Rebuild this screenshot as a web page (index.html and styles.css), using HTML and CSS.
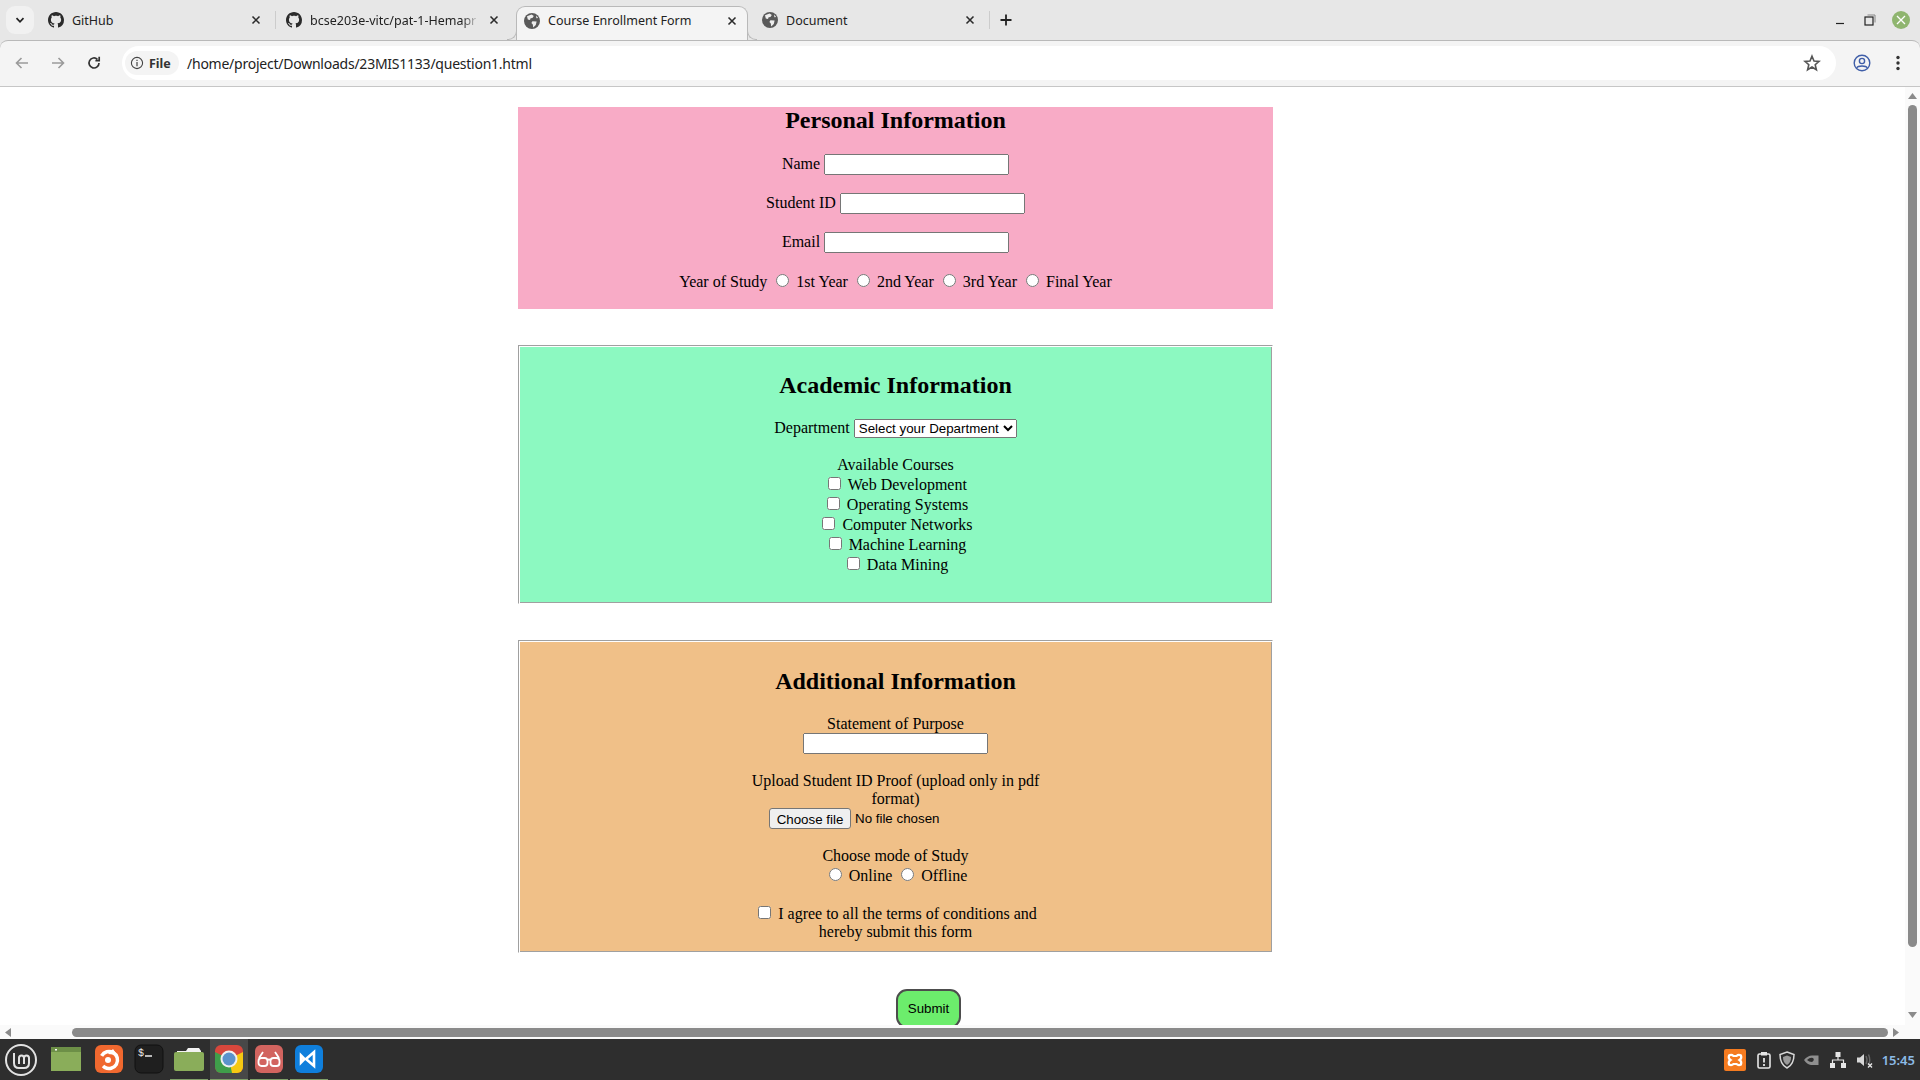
FILE: index.html
```html
<!DOCTYPE html>
<html lang="en">
<head>
<meta charset="utf-8">
<title>Course Enrollment Form</title>
<link rel="stylesheet" href="styles.css">
</head>
<body>
<svg class="defs" width="0" height="0" aria-hidden="true">
  <defs>
    <symbol id="gh" viewBox="0 0 16 16"><path fill="#2b2b2b" d="M8 0C3.58 0 0 3.58 0 8c0 3.54 2.29 6.53 5.47 7.59.4.07.55-.17.55-.38 0-.19-.01-.82-.01-1.49-2.01.37-2.53-.49-2.69-.94-.09-.23-.48-.94-.82-1.13-.28-.15-.68-.52-.01-.53.63-.01 1.08.58 1.23.82.72 1.21 1.87.87 2.33.66.07-.52.28-.87.51-1.07-1.78-.2-3.64-.89-3.64-3.95 0-.87.31-1.59.82-2.15-.08-.2-.36-1.02.08-2.12 0 0 .67-.21 2.2.82.64-.18 1.32-.27 2-.27.68 0 1.36.09 2 .27 1.53-1.04 2.2-.82 2.2-.82.44 1.1.16 1.92.08 2.12.51.56.82 1.27.82 2.15 0 3.07-1.87 3.75-3.65 3.95.29.25.54.73.54 1.48 0 1.07-.01 1.93-.01 2.2 0 .21.15.46.55.38A8.013 8.013 0 0016 8c0-4.42-3.58-8-8-8z"/></symbol>
    <symbol id="globe" viewBox="0 0 16 16"><circle cx="8" cy="8" r="8" fill="#5a5a5a"/><path fill="#eee" d="M3 3.2 7.6 1.6 9.8 3 8.4 5 6.6 5.2 6 7 3.8 6.6ZM8.4 8.2 12.6 8.6 11.8 12 9.2 14.6 8.8 11.6 7.4 10ZM12 2.6 14.2 5 12.4 5.2Z"/></symbol>
    <symbol id="x" viewBox="0 0 16 16"><path stroke="#2b2b2b" stroke-width="1.8" fill="none" d="M4 4 12 12M12 4 4 12"/></symbol>
  </defs>
</svg>
<div class="app">
  <header class="tabstrip">
    <div class="chev"><svg width="12" height="12" viewBox="0 0 12 12"><path d="M2.5 4.2 6 7.8 9.5 4.2" fill="none" stroke="#222" stroke-width="1.7"/></svg></div>
    <div class="tab tab-first"><svg class="favicon"><use href="#gh"/></svg><span class="tab-title">GitHub</span><svg class="tab-x"><use href="#x"/></svg></div>
    <div class="sep"></div>
    <div class="tab tab-second"><svg class="favicon"><use href="#gh"/></svg><span class="tab-title fade">bcse203e-vitc/pat-1-Hemapr</span><svg class="tab-x"><use href="#x"/></svg></div>
    <div class="tab tab-active"><svg class="favicon"><use href="#globe"/></svg><span class="tab-title">Course Enrollment Form</span><svg class="tab-x"><use href="#x"/></svg></div>
    <div class="tab tab-last"><svg class="favicon"><use href="#globe"/></svg><span class="tab-title">Document</span><svg class="tab-x"><use href="#x"/></svg></div>
    <div class="sep"></div>
    <svg class="newtab" width="14" height="14" viewBox="0 0 14 14"><path d="M7 1.5V12.5M1.5 7H12.5" stroke="#222" stroke-width="1.8"/></svg>
    <div class="winctl">
      <svg width="10" height="10" viewBox="0 0 10 10"><path d="M1 8.5H9" stroke="#222" stroke-width="1.2"/></svg>
      <svg width="12" height="12" viewBox="0 0 12 12"><rect x="1" y="3" width="8" height="8" fill="none" stroke="#222" stroke-width="1.2"/><path d="M3.5 1H11V8.5" fill="none" stroke="#888"/></svg>
      <div class="winclose"><svg width="10" height="10" viewBox="0 0 10 10"><path d="M1 1 9 9M9 1 1 9" stroke="#fff" stroke-width="1.3"/></svg></div>
    </div>
  </header>
  <nav class="toolbar">
    <svg class="nav-ic" width="16" height="16" viewBox="0 0 16 16"><path d="M14 8H3M7.5 3 2.5 8 7.5 13" fill="none" stroke="#9a9a9a" stroke-width="1.6"/></svg>
    <svg class="nav-ic" width="16" height="16" viewBox="0 0 16 16"><path d="M2 8H13M8.5 3 13.5 8 8.5 13" fill="none" stroke="#9a9a9a" stroke-width="1.6"/></svg>
    <svg class="nav-ic" width="16" height="16" viewBox="0 0 16 16"><path d="M13 8A5 5 0 1 1 11.4 4.3M13.2 1.8V5.6H9.4" fill="none" stroke="#333" stroke-width="1.7"/></svg>
    <div class="omnibox">
      <div class="chip"><svg width="14" height="14" viewBox="0 0 14 14"><circle cx="7" cy="7" r="5.6" fill="none" stroke="#444" stroke-width="1.1"/><path d="M7 6V10.2M7 3.8V5" stroke="#444" stroke-width="1.2"/></svg><b>File</b></div>
      <span class="url">/home/project/Downloads/23MIS1133/question1.html</span>
      <svg class="star" width="18" height="18" viewBox="0 0 18 18"><path d="M9 2.2 11 7 16 7.4 12.2 10.7 13.4 15.7 9 13 4.6 15.7 5.8 10.7 2 7.4 7 7Z" fill="none" stroke="#555" stroke-width="1.6"/></svg>
    </div>
    <svg class="acct" width="18" height="18" viewBox="0 0 18 18"><circle cx="9" cy="9" r="7.8" fill="none" stroke="#3f5ea8" stroke-width="1.4"/><circle cx="9" cy="7" r="2.6" fill="none" stroke="#3f5ea8" stroke-width="1.4"/><path d="M3.8 14C5 11.4 13 11.4 14.2 14" fill="none" stroke="#3f5ea8" stroke-width="1.4"/></svg>
    <svg class="menu" width="4" height="16" viewBox="0 0 4 16"><circle cx="2" cy="2.5" r="1.7" fill="#333"/><circle cx="2" cy="8" r="1.7" fill="#333"/><circle cx="2" cy="13.5" r="1.7" fill="#333"/></svg>
  </nav>
  <div class="viewport">
    <main class="page">
      <form class="form">
        <section class="card card-plain card-pink">
          <h2>Personal Information</h2>
          <div class="row"><label>Name <input class="text" type="text"></label></div>
          <div class="row"><label>Student ID <input class="text" type="text"></label></div>
          <div class="row"><label>Email <input class="text" type="text"></label></div>
          <div class="row row-last">Year of Study <input type="radio" name="y"> 1st Year <input type="radio" name="y"> 2nd Year <input type="radio" name="y"> 3rd Year <input type="radio" name="y"> Final Year</div>
        </section>
        <section class="card card-framed card-green">
          <h2>Academic Information</h2>
          <div class="dept"><label>Department <select class="select"><option>Select your Department</option></select></label></div>
          <div class="courses">
            <div class="line line-head">Available Courses</div>
            <div class="line"><input type="checkbox"> Web Development</div>
            <div class="line"><input type="checkbox"> Operating Systems</div>
            <div class="line"><input type="checkbox"> Computer Networks</div>
            <div class="line"><input type="checkbox"> Machine Learning</div>
            <div class="line"><input type="checkbox"> Data Mining</div>
          </div>
        </section>
        <section class="card card-framed card-orange">
          <h2>Additional Information</h2>
          <div class="narrow">
            <div class="purpose"><label>Statement of Purpose<input class="text text-block" type="text"></label></div>
            <div class="upload">Upload Student ID Proof (upload only in pdf format)
              <div class="fileline"><button class="filebtn" type="button">Choose file</button><span>No file chosen</span></div>
            </div>
            <div class="mode">
              <div class="line line-head">Choose mode of Study</div>
              <div class="line"><input type="radio" name="m"> Online <input type="radio" name="m"> Offline</div>
            </div>
            <div class="agree"><input type="checkbox"> I agree to all the terms of conditions and hereby submit this form</div>
          </div>
        </section>
        <div class="actions"><button class="submit" type="button">Submit</button></div>
      </form>
    </main>
    <aside class="vscroll">
      <svg width="9" height="6" viewBox="0 0 9 6"><path d="M0 6 4.5 0 9 6Z" fill="#8a8a8a"/></svg>
      <div class="vthumb"></div>
      <svg width="9" height="6" viewBox="0 0 9 6"><path d="M0 0 4.5 6 9 0Z" fill="#8a8a8a"/></svg>
    </aside>
  </div>
  <div class="hscroll">
    <svg width="6" height="9" viewBox="0 0 6 9"><path d="M6 0 0 4.5 6 9Z" fill="#8a8a8a"/></svg>
    <div class="hthumb"></div>
    <svg width="6" height="9" viewBox="0 0 6 9"><path d="M0 0 6 4.5 0 9Z" fill="#8a8a8a"/></svg>
  </div>
  <footer class="taskbar">
    <div class="launcher">
      <svg class="mint" width="34" height="34" viewBox="0 0 34 34"><circle cx="17" cy="17" r="15" fill="none" stroke="#e2e2e2" stroke-width="2"/><path d="M10 10V20Q10 25 15 25H20Q25 25 25 20V15Q25 12.5 22.5 12.5T20 15V21M20 15Q20 12.5 17.5 12.5T15 15V21" fill="none" stroke="#e2e2e2" stroke-width="2"/></svg>
      <div class="slot slot-1"><svg width="30" height="24" viewBox="0 0 30 24"><rect width="30" height="24" fill="#8aad5a"/><rect width="30" height="5" fill="#6d8f47"/><rect x="4" y="2" width="2" height="1.5" fill="#fff"/></svg></div>
      <div class="slot"><svg width="28" height="28" viewBox="0 0 28 28"><rect width="28" height="28" rx="6" fill="#f0682f"/><circle cx="14" cy="15" r="8.5" fill="none" stroke="#fff" stroke-width="3.5" stroke-dasharray="42 12" transform="rotate(-150 14 15)"/><path d="M13 9 18 4 22 10Z" fill="#fff"/><circle cx="13" cy="15" r="3" fill="#fff"/></svg></div>
      <div class="slot"><svg width="30" height="30" viewBox="0 0 30 30"><rect x="1" y="1" width="28" height="28" rx="6" fill="#1f1f1f" stroke="#111"/><text class="term" x="4" y="12">$</text><path d="M11 12H18" stroke="#eee" stroke-width="1.5"/></svg></div>
      <div class="slot slot-run"><svg width="30" height="24" viewBox="0 0 30 24"><path d="M3 4H12L14 1H25L27 4V8H3Z" fill="#f2f2f2"/><rect y="5" width="30" height="19" rx="2" fill="#8aad5a"/></svg></div>
      <div class="slot slot-run slot-on"><svg width="28" height="28" viewBox="0 0 28 28"><defs><clipPath id="rr"><rect width="28" height="28" rx="6"/></clipPath></defs><g clip-path="url(#rr)"><rect width="28" height="28" fill="#d8473c"/><path d="M14 14 28 7V28H16Z" fill="#f6c812"/><path d="M14 14 0 7V28H17Z" fill="#3f9e4a"/><circle cx="14" cy="14" r="8.5" fill="#f0f0f0"/><circle cx="14" cy="14" r="6.5" fill="#5c93cc"/></g></svg></div>
      <div class="slot slot-run"><svg width="28" height="28" viewBox="0 0 28 28"><rect width="28" height="28" rx="6" fill="#d2645f"/><g fill="none" stroke="#fff" stroke-width="1.8"><rect x="3.5" y="13" width="9" height="8" rx="3"/><rect x="15.5" y="13" width="9" height="8" rx="3"/><path d="M12.5 15Q14 14 15.5 15M4 13 8 7M24 13 20 7"/></g></svg></div>
      <div class="slot slot-run"><svg width="28" height="28" viewBox="0 0 28 28"><rect width="28" height="28" rx="6" fill="#0f7fdc"/><path d="M19 7V21L11 14ZM6 10.5 9.5 14 6 17.5Z" fill="none" stroke="#fff" stroke-width="2.6"/></svg></div>
    </div>
    <div class="tray">
      <svg width="22" height="22" viewBox="0 0 22 22"><rect width="22" height="22" rx="2" fill="#f57b20"/><path d="M5 6.5Q7.5 5 9.5 7H12.5Q14.5 5 17 6.5 18 9.5 15.5 11 18 12.5 17 15.5 14.5 17 12.5 15H9.5Q7.5 17 5 15.5 4 12.5 6.5 11 4 9.5 5 6.5Z" fill="none" stroke="#fff" stroke-width="2.2"/></svg>
      <svg class="t-clip" width="14" height="18" viewBox="0 0 14 18"><rect x="1" y="3" width="12" height="14" rx="1.5" fill="none" stroke="#e6e6e6" stroke-width="1.6"/><rect x="4" y="1" width="6" height="3.5" fill="#e6e6e6"/><path d="M7 7V11.5M7 13V15" stroke="#e6e6e6" stroke-width="1.8"/></svg>
      <svg class="t-shield" width="16" height="18" viewBox="0 0 16 18"><path d="M8 1 15 3.5C15 10 13 14.5 8 17 3 14.5 1 10 1 3.5Z" fill="none" stroke="#d8d8d8" stroke-width="1.5"/><path d="M8 4.5 12 6C12 10 11 12 8 14 5 12 4 10 4 6Z" fill="#9a9a9a"/></svg>
      <svg class="t-nv" width="16" height="12" viewBox="0 0 16 12"><path d="M1 6Q5 1 10 1.5H15.5V11H8Q4 10.5 1 6Z" fill="#8f8f8f"/><path d="M4 6Q7 3 10 4 12 6 9 8 6 8 4 6Z" fill="#2e2e2e"/></svg>
      <svg class="t-net" width="16" height="16" viewBox="0 0 16 16"><path d="M5.5 0H10.5V5H5.5ZM0 11H5V16H0ZM11 11H16V16H11Z" fill="#e6e6e6"/><path d="M8 5V8M2.5 11V8H13.5V11" fill="none" stroke="#e6e6e6" stroke-width="1.2"/></svg>
      <svg class="t-vol" width="16" height="16" viewBox="0 0 16 16"><path d="M0 5.5H3L7 2V14L3 10.5H0Z" fill="#d8d8d8"/><path d="M9 4Q11 8 9 12M11.5 2.5Q14 8 11.5 13" fill="none" stroke="#666" stroke-width="1.4"/><path d="M11 11.5 15 15.5M15 11.5 11 15.5" stroke="#e6e6e6" stroke-width="1.4"/></svg>
      <span class="clock">15:45</span>
    </div>
  </footer>
</div>
</body>
</html>
```
FILE: styles.css
```css
* { box-sizing: border-box; }
html, body { margin: 0; height: 100%; overflow: hidden; }
body { font-family: "Liberation Serif", serif; font-size: 16px; color: #000; background: #fff; }
.defs { position: absolute; }
.app { display: flex; flex-direction: column; width: 1920px; height: 1080px; background: #e7e7e7; }

/* tab strip */
.tabstrip { flex: 0 0 39px; position: relative; z-index: 1; display: flex; align-items: flex-start; padding-left: 6px; font-family: "Noto Sans", sans-serif; font-size: 12.5px; color: #222; }
.chev { width: 28px; height: 28px; margin-top: 6px; background: #f1f1f1; border-radius: 9px; display: flex; align-items: center; justify-content: center; flex: none; }
.tab { height: 28px; margin-top: 6px; display: flex; align-items: center; gap: 8px; flex: none; }
.tab-first { width: 235px; margin-left: 6px; padding: 0 12px 0 8px; }
.tab-second { width: 236px; padding: 0 11px 0 10px; }
.tab-active { position: relative; width: 232px; height: 34px; margin-left: 4px; padding: 0 8px 6px 7px; background: #f4f4f4; border: 1px solid #b9b9b9; border-bottom: none; border-radius: 9px 9px 0 0; }
.tab-active::before, .tab-active::after { content: ""; position: absolute; bottom: 0; width: 9px; height: 9px; background: #e7e7e7; border-bottom: 1px solid #b9b9b9; }
.tab-active::before { left: -10px; border-right: 1px solid #b9b9b9; border-bottom-right-radius: 9px; }
.tab-active::after { right: -10px; border-left: 1px solid #b9b9b9; border-bottom-left-radius: 9px; }
.tab-last { width: 241px; padding: 0 12px 0 14px; }
.favicon { width: 16px; height: 16px; flex: none; }
.tab-title { flex: 1; white-space: nowrap; overflow: hidden; }
.fade { -webkit-mask-image: linear-gradient(90deg, #000 90%, transparent); mask-image: linear-gradient(90deg, #000 90%, transparent); }
.tab-x { width: 14px; height: 14px; flex: none; }
.sep { width: 1px; height: 18px; margin-top: 11px; background: #ccc; flex: none; }
.newtab { margin: 13px 0 0 9px; flex: none; }
.winctl { margin-left: auto; margin-right: 10px; margin-top: 10px; display: flex; align-items: center; gap: 19px; height: 20px; }
.winclose { width: 18px; height: 18px; margin-left: -3px; border-radius: 50%; background: #8fb56f; display: flex; align-items: center; justify-content: center; }

/* toolbar */
.toolbar { flex: 0 0 47px; background: #f4f4f4; display: flex; align-items: center; padding: 0 20px 1px 14px; border-top: 1px solid #b9b9b9; border-bottom: 1px solid #c6c6c6; border-radius: 8px 8px 0 0; font-family: "Noto Sans", sans-serif; }
.nav-ic { margin-right: 20px; flex: none; }
.omnibox { flex: none; width: 1714px; height: 34px; background: #fff; border-radius: 17px; display: flex; align-items: center; padding: 0 15px 0 3px; }
.chip { display: flex; align-items: center; gap: 5px; height: 24px; width: 54px; padding-left: 5px; background: #f4f4f4; border-radius: 12px; font-size: 12.5px; color: #333; }
.url { margin-left: 8px; font-size: 14px; letter-spacing: -0.24px; color: #222; }
.star { margin-left: auto; }
.acct { margin-left: 17px; flex: none; }
.menu { margin-left: 25px; flex: none; }

/* page */
.viewport { flex: 0 0 938px; display: flex; min-height: 0; background: #fff; }
.page { flex: 1; min-width: 0; overflow: hidden; padding: 20px 0 0 518px; }
.form { width: 755px; }
.card { width: 755px; text-align: center; }
.card h2 { margin: 0; font-size: 24px; line-height: 28px; font-weight: bold; }
.card-plain { padding: 0; height: 202px; }
.card-plain h2 { line-height: 26px; margin-bottom: 20px; }
.card-pink { background: #f8abc6; }
.card-framed { border: 1px solid; border-color: #a0a0a0 #fff #fff #a0a0a0; box-shadow: inset 1px 1px 0 #fff, inset -1px -1px 0 #a0a0a0; }
.card-green { background: #8cf9c1; margin-top: 36px; height: 259px; padding-top: 25px; }
.card-orange { background: #f0c088; margin-top: 36px; height: 313px; padding-top: 26px; }
.row { height: 21px; line-height: 21px; margin-bottom: 18px; }
.row-last { margin: 19px 0 0; }
input.text { width: 185px; height: 21px; vertical-align: baseline; }
input.text-block { display: block; margin: 0 auto; }
.dept { margin-top: 19px; height: 19px; line-height: 19px; }
.select { width: 163px; height: 19px; font-family: "Liberation Sans", sans-serif; font-size: 13.333px; }
.courses { margin-top: 18px; }
.line { height: 20px; line-height: 20px; }
.line-head { height: 19px; }
.narrow { width: 300px; margin: 20px auto 0; }
.purpose { line-height: 18px; }
.upload { margin-top: 18px; line-height: 18px; }
.fileline { width: 253px; height: 21px; margin: 0 auto; display: flex; align-items: center; gap: 4px; font-family: "Liberation Sans", sans-serif; font-size: 13.333px; line-height: 21px; }
.filebtn { width: 82px; height: 21px; margin-top: -1px; padding: 0; background: #efefef; border: 1px solid #767676; border-radius: 3px; font: inherit; color: #000; flex: none; }
.mode { margin-top: 17px; }
.agree { margin-top: 18px; line-height: 18px; }
.actions { margin-top: 36px; padding-left: 378px; }
.submit { width: 65px; height: 39px; background: #6ced6c; border: 2px solid #4d4d4d; border-radius: 11px; font-family: "Liberation Sans", sans-serif; font-size: 13.333px; color: #000; padding: 0; }

/* scrollbars */
.vscroll { flex: 0 0 15px; background: #fafafa; display: flex; flex-direction: column; align-items: center; padding: 6px 0 7px; }
.vthumb { width: 9px; flex: 1; margin: 6px 0 65px; background: #8a8a8a; border-radius: 5px; }
.hscroll { flex: 0 0 14px; background: #fafafa; display: flex; align-items: center; padding: 1px 21px 0 5px; }
.hthumb { flex: 1; height: 9px; margin: 0 5px 0 61px; background: #8a8a8a; border-radius: 5px; }

/* taskbar */
.taskbar { flex: 0 0 42px; background: #2e2e2e; display: flex; align-items: center; justify-content: space-between; padding: 0 5px 0 4px; }
.launcher { display: flex; align-items: stretch; height: 42px; }
.mint { align-self: center; margin-right: 8px; }
.slot { width: 40px; height: 42px; display: flex; align-items: center; justify-content: center; border-bottom: 2px solid transparent; }
.slot-1 { margin-right: 3px; }
.slot-run { width: 38px; margin: 0 1px; border-bottom-color: #7f9f68; }
.slot-on { background: #484848; }
.term { font-family: "Liberation Mono", monospace; font-size: 10px; fill: #eee; }
.tray { display: flex; align-items: center; margin-bottom: 1px; }
.t-clip { margin-left: 11px; }
.t-shield { margin-left: 8px; }
.t-nv { margin-left: 8px; }
.t-net { margin-left: 11px; }
.t-vol { margin-left: 11px; }
.clock { font-family: "Noto Sans", sans-serif; font-weight: 600; font-size: 13px; color: #8cbbe6; margin-left: 9px; }
```
